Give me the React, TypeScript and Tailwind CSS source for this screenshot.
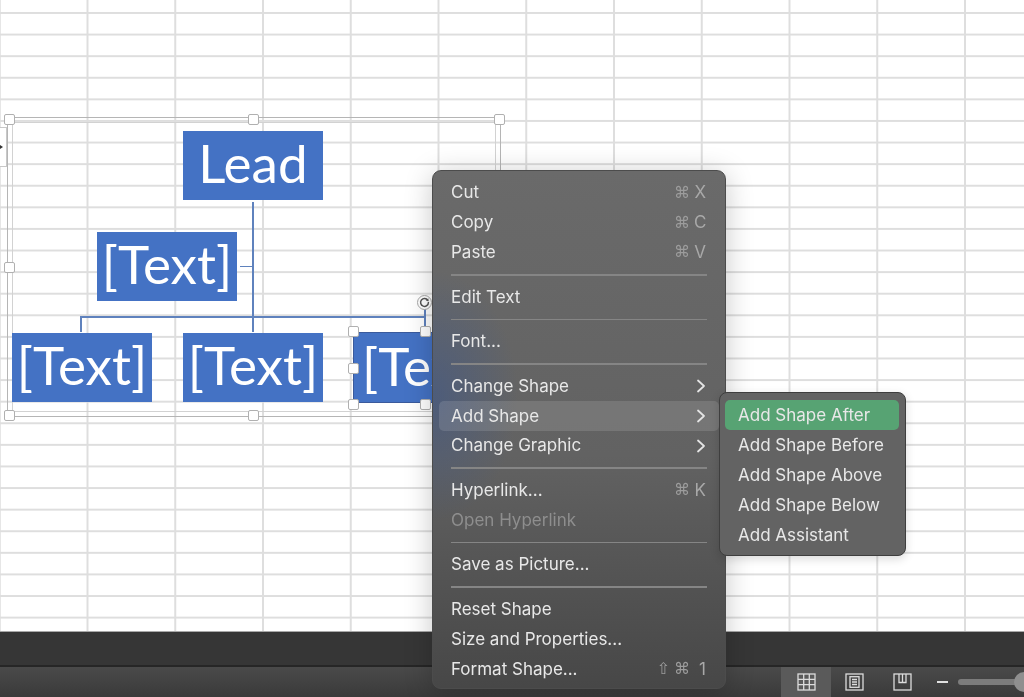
import React from "react";

const Handle = ({ x, y, s = 11 }: { x: number; y: number; s?: number }) => (
  <div
    className="absolute bg-white border border-[#b0b0b0] rounded-[2px]"
    style={{ left: x - s / 2, top: y - s / 2, width: s, height: s }}
  />
);

const Shape = ({ x, y, w = 140, label }: { x: number; y: number; w?: number; label: string }) => (
  <div
    className="absolute h-[69px] bg-[#4472c4] flex items-center justify-center pb-[6px] text-white text-[53px] leading-none font-['Lato',sans-serif] overflow-hidden whitespace-nowrap"
    style={{ left: x, top: y, width: w }}
  >
    {label}
  </div>
);

const Line = ({ x, y, w, h }: { x: number; y: number; w: number; h: number }) => (
  <div className="absolute bg-[#5f82bd]" style={{ left: x, top: y, width: w, height: h }} />
);

type Item = { label: string; shortcut?: string[]; arrow?: boolean; active?: boolean; disabled?: boolean };

const groups: Item[][] = [
  [
    { label: "Cut", shortcut: ["⌘", "X"] },
    { label: "Copy", shortcut: ["⌘", "C"] },
    { label: "Paste", shortcut: ["⌘", "V"] },
  ],
  [{ label: "Edit Text" }],
  [{ label: "Font..." }],
  [
    { label: "Change Shape", arrow: true },
    { label: "Add Shape", arrow: true, active: true },
    { label: "Change Graphic", arrow: true },
  ],
  [{ label: "Hyperlink...", shortcut: ["⌘", "K"] }, { label: "Open Hyperlink", disabled: true }],
  [{ label: "Save as Picture..." }],
  [
    { label: "Reset Shape" },
    { label: "Size and Properties..." },
    { label: "Format Shape...", shortcut: ["⇧", "⌘", "1"] },
  ],
];

const Chevron = () => (
  <svg width="10" height="14" viewBox="0 0 10 14" fill="none">
    <path d="M2 1.5 8 7l-6 5.5" stroke="#e4e4e4" strokeWidth="1.8" strokeLinecap="round" strokeLinejoin="round" />
  </svg>
);

const Shortcut = ({ keys }: { keys: string[] }) => (
  <span className="flex items-center gap-[4px] text-[#a8a8a8]">
    {keys.map((k, i) =>
      i === keys.length - 1 ? (
        <span key={k} className="w-[12px] text-right text-[17px]">
          {k}
        </span>
      ) : (
        <span key={k} className="text-[#9c9c9c] font-['DejaVu_Sans',sans-serif] text-[16px]">
          {k}
        </span>
      )
    )}
  </span>
);

const Row = ({ item }: { item: Item }) => (
  <div
    className={
      "h-[29.8px] mx-[6px] pl-[12px] pr-[13px] flex items-center justify-between rounded-[5px] " +
      (item.active ? "bg-[#ffffff1f] " : "") +
      (item.disabled ? "text-[#8e8e8e]" : "text-[#e8e8e8]")
    }
  >
    <span>{item.label}</span>
    {item.shortcut && <Shortcut keys={item.shortcut} />}
    {item.arrow && <Chevron />}
  </div>
);

export default function App() {
  return (
    <div className="w-[1024px] h-[697px] relative overflow-hidden flex flex-col font-['Inter','Noto_Sans',sans-serif] [filter:blur(0.35px)]">
      {/* sheet */}
      <div className="relative h-[631px] bg-white [background-image:linear-gradient(to_right,#dedede_1.5px,transparent_1.5px),linear-gradient(to_bottom,#dedede_1.5px,transparent_1.5px)] [background-size:87.75px_21.6px] [background-position:86.5px_12px]">
        {/* SmartArt frame */}
        <div className="absolute left-[7px] top-[117px] w-[494px] h-[300px] border border-[#b5b5b5] p-[4px]">
          <div className="w-full h-full border border-[#d2d2d2]" />
        </div>
        {/* text pane tab */}
        <div className="absolute left-0 top-[127px] w-[7px] h-[40px] bg-white border-y border-r border-[#c8c8c8] flex items-center">
          <div className="w-0 h-0 border-y-[2px] border-y-transparent border-l-[3px] border-l-[#333]" />
        </div>

        <Line x={252} y={202} w={2} h={130} />
        <Line x={240} y={266} w={13} h={1} />
        <Line x={81} y={316} w={344} h={2} />
        <Line x={80} y={316} w={2} h={16} />
        <Line x={424} y={306} w={2} h={26} />

        <Shape x={183} y={131} label="Lead" />
        <Shape x={97} y={232} label="[Text]" />
        <Shape x={12} y={333} label="[Text]" />
        <Shape x={183} y={333} label="[Text]" />
        <div className="absolute left-[353px] top-[332px] w-[80px] h-[71px] border-y border-l border-[#3a5a9c] bg-[#4472c4] flex items-center pl-[8px] pb-[5px] text-white text-[53px] leading-none font-['Lato',sans-serif] whitespace-nowrap overflow-hidden">
          [Text]
        </div>

        <Handle x={9} y={119} />
        <Handle x={253} y={119} />
        <Handle x={499} y={119} />
        <Handle x={9} y={267} />
        <Handle x={9} y={415} />
        <Handle x={253} y={415} />
        <Handle x={353} y={331} />
        <Handle x={425} y={331} />
        <Handle x={353} y={368} />
        <Handle x={353} y={404} />
        <Handle x={425} y={404} />

        {/* rotate handle */}
        <div className="absolute left-[417px] top-[295px] w-[15px] h-[15px] rounded-full bg-white border border-[#a8a8a8] flex items-center justify-center">
          <svg width="11" height="11" viewBox="0 0 11 11" fill="none">
            <path d="M8.8 3.4A3.9 3.9 0 1 0 9.4 5.5" stroke="#555" strokeWidth="1.5" strokeLinecap="round" />
            <path d="M9.4 1.2v2.6H6.8" fill="#555" />
          </svg>
        </div>
      </div>

      {/* lower dark band */}
      <div className="h-[36px] bg-[#363636] border-t border-[#a8a8a8] border-b-2 border-b-[#262626] shrink-0" />

      {/* status bar */}
      <div className="flex-1 bg-gradient-to-b from-[#4a4a4a] to-[#3a3a3a] flex items-stretch justify-end">
        <div className="w-[50px] bg-[#5a5a5a] flex items-center justify-center mr-[-1px]">
          <svg width="19" height="18" viewBox="0 0 19 18" fill="none" stroke="#dcdcdc" strokeWidth="1.3">
            <rect x="1" y="1" width="17" height="16" />
            <path d="M6.7 1v16M12.3 1v16M1 6.3h17M1 11.7h17" />
          </svg>
        </div>
        <div className="w-[48px] flex items-center justify-center">
          <svg width="19" height="18" viewBox="0 0 19 18" fill="none" stroke="#dcdcdc" strokeWidth="1.3">
            <rect x="1" y="1" width="17" height="16" />
            <rect x="5" y="3.7" width="9" height="10.6" />
            <path d="M7 6.5h5M7 9h5M7 11.5h5" />
          </svg>
        </div>
        <div className="w-[48px] flex items-center justify-center">
          <svg width="19" height="18" viewBox="0 0 19 18" fill="none" stroke="#dcdcdc" strokeWidth="1.3">
            <rect x="1" y="1" width="17" height="16" />
            <path d="M6 1v8.5h7V1M9.5 1v8.5" />
          </svg>
        </div>
        <div className="w-[98px] flex items-center pl-[11px]">
          <div className="w-[11px] h-[2px] bg-[#e0e0e0] shrink-0" />
          <div className="ml-[10px] flex-1 h-[6px] rounded-l-full bg-[#7c7c7c] mr-[-4px]" />
          <div className="w-[20px] h-[20px] rounded-full bg-[#8f8f8f] mr-[-10px] shrink-0" />
        </div>
      </div>

      {/* context menu */}
      <div className="absolute left-[432px] top-[170px] w-[294px] h-[519px] rounded-[9px] border border-[#4c4c4c] bg-gradient-to-b from-[#6a6a6a] via-[#626262] via-55% to-[#474747] shadow-[0_4px_28px_rgba(0,0,0,0.22)] pt-[7px] text-[17px] leading-none overflow-hidden">
        <div className="absolute inset-0 [background-image:radial-gradient(ellipse_85px_125px_at_0px_225px,rgba(55,85,145,0.5),transparent)]" />
        <div className="relative">
          {groups.map((g, i) => (
            <div key={i}>
              {i > 0 && (
                <div className="h-[14.8px] flex items-center mx-[18px]">
                  <div className="w-full h-[1.5px] bg-[#858585]" />
                </div>
              )}
              {g.map((it) => (
                <Row key={it.label} item={it} />
              ))}
            </div>
          ))}
        </div>
      </div>

      {/* submenu */}
      <div className="absolute left-[719px] top-[392px] w-[187px] h-[164px] rounded-[8px] border border-[#3e3e3e] bg-[#636363] shadow-[0_3px_10px_rgba(0,0,0,0.15)] pt-[7px] text-[17px] leading-none text-[#e8e8e8]">
        {["Add Shape After", "Add Shape Before", "Add Shape Above", "Add Shape Below", "Add Assistant"].map((s, i) => (
          <div
            key={s}
            className={
              "h-[29.8px] ml-[5px] mr-[6px] px-[13px] flex items-center rounded-[5px] " +
              (i === 0 ? "bg-[#57a373]" : "")
            }
          >
            <span className="translate-y-[1px]">{s}</span>
          </div>
        ))}
      </div>
    </div>
  );
}
